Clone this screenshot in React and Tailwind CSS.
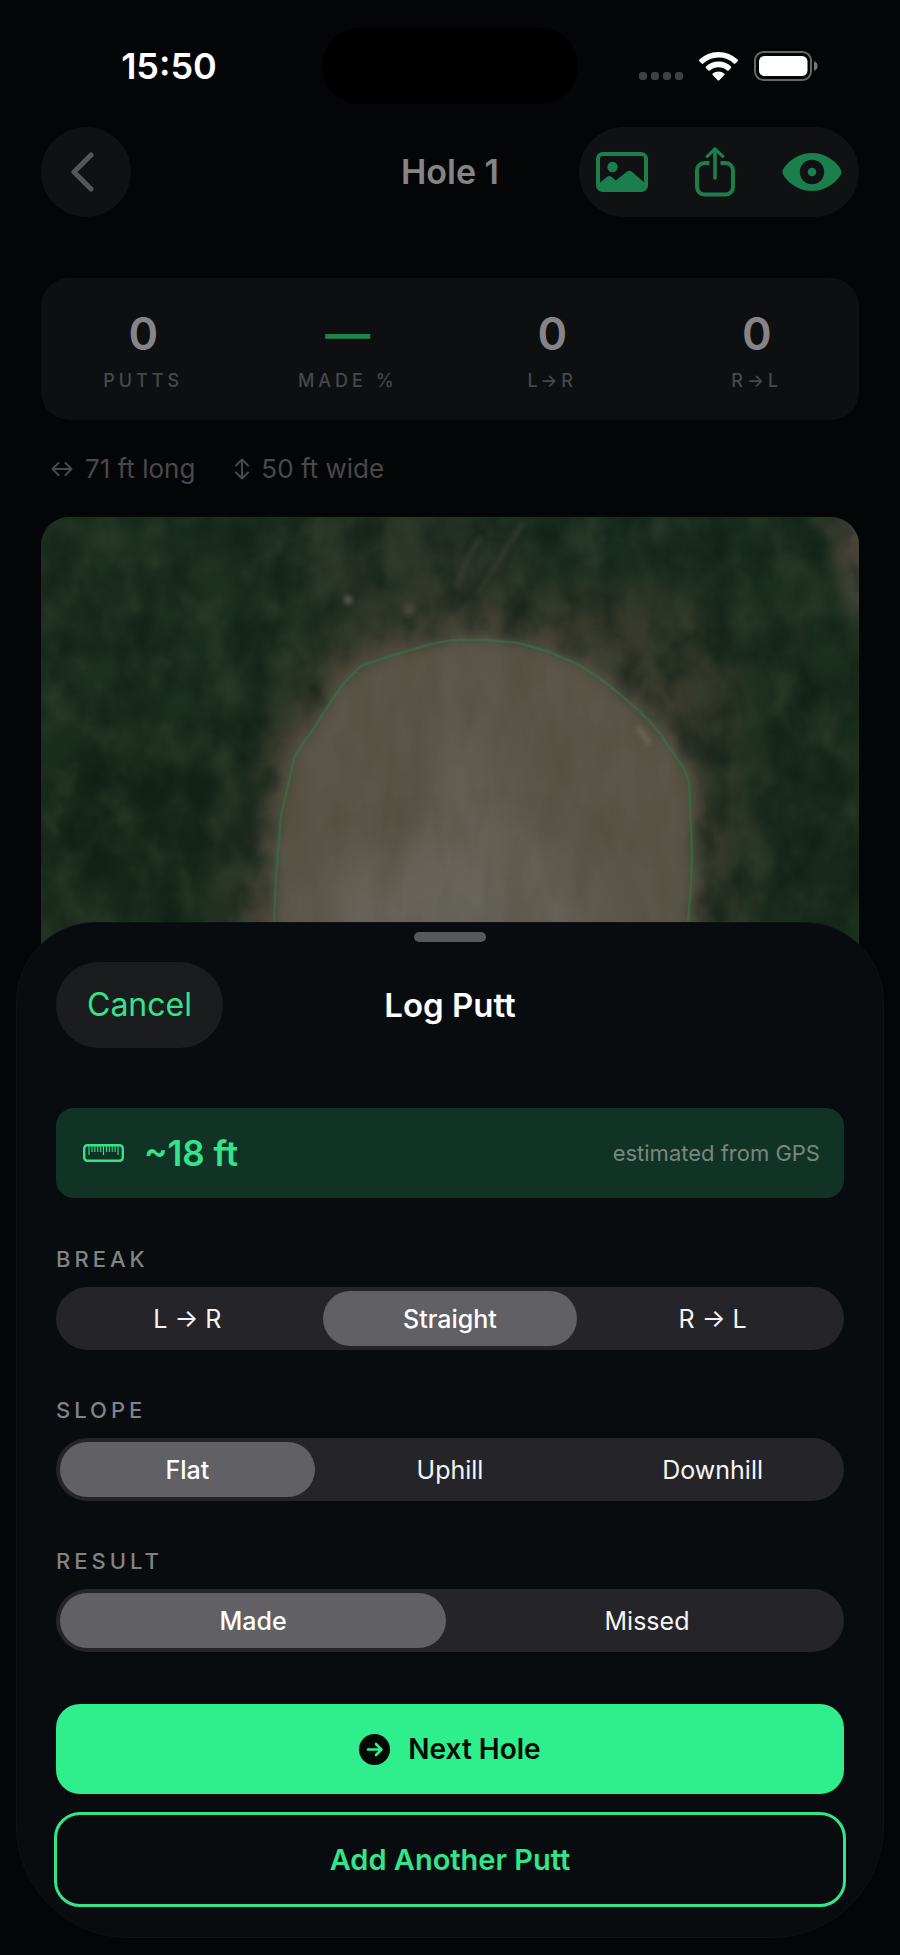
import { useState } from "react";

function WifiIcon() {
  return (
    <svg viewBox="0 0 39 29" className="h-[29px] w-[39px]" fill="#fff" aria-hidden="true">
      <path d="M19.500 0C27 0 33.800 2.900 38.600 7.600c.5.5.5 1.100 0 1.600l-2.300 2.300c-.5.5-1.100.5-1.600 0A21.800 21.800 0 0 0 19.500 5.600c-5.900 0-11.200 2.200-15.200 5.900-.5.500-1.100.5-1.600 0L.4 9.200c-.5-.5-.5-1.100 0-1.600A27.300 27.300 0 0 1 19.500 0Z" />
      <path d="M19.500 9.600c4.800 0 9.200 1.800 12.500 4.800.5.500.5 1.100 0 1.600l-2.400 2.400c-.5.500-1.100.5-1.600 0a12.800 12.800 0 0 0-17 0c-.5.500-1.100.5-1.600 0L7 16c-.5-.5-.5-1.100 0-1.600a18.600 18.600 0 0 1 12.500-4.800Z" />
      <path d="M19.500 19.500c2.200 0 4.200.8 5.700 2 .5.400.5 1.100.1 1.600l-5 5.100c-.5.500-1.100.5-1.600 0l-5-5.100c-.4-.5-.4-1.200.1-1.600 1.500-1.200 3.500-2 5.700-2Z" />
    </svg>
  );
}

function BatteryIcon() {
  return (
    <svg viewBox="0 0 64 30" className="h-[30px] w-16" aria-hidden="true">
      <rect x="1" y="1" width="56" height="28" rx="8.500" fill="none" stroke="#66676a" strokeWidth="2" />
      <rect x="5" y="5" width="48.500" height="20" rx="5.500" fill="#fff" />
      <path d="M60 10.200c2.300.7 3.600 2.600 3.600 4.800s-1.300 4.100-3.600 4.800Z" fill="#77787a" />
    </svg>
  );
}

function PhotoIcon() {
  return (
    <svg viewBox="0 0 52 40" className="h-10 w-[52px]" aria-hidden="true">
      <rect x="2" y="2" width="48" height="36" rx="4.500" fill="none" stroke="currentColor" strokeWidth="4" />
      <circle cx="16.500" cy="15" r="5.200" fill="currentColor" />
      <path d="M3 31.500 11.200 24.800c1.500-1.200 3-1.100 4.300 0l4.300 3.700L30.400 20c2-1.600 4-1.500 5.900.1L49 31.300V35a3.500 3.500 0 0 1-3.500 3.500h-39A3.500 3.500 0 0 1 3 35Z" fill="currentColor" />
    </svg>
  );
}

function ShareIcon() {
  return (
    <svg viewBox="0 0 40 50" className="h-[50px] w-10" fill="none" stroke="currentColor" strokeWidth="4" aria-hidden="true">
      <path d="M14.500 16H9.500A7.500 7.500 0 0 0 2 23.500V40a7.500 7.500 0 0 0 7.500 7.500h21A7.500 7.500 0 0 0 38 40V23.500A7.500 7.500 0 0 0 30.500 16h-5" />
      <path d="M20 31V3" strokeWidth="3.600" strokeLinecap="round" />
      <path d="m12.300 9.300 7.700-7.500 7.700 7.500" strokeWidth="3.200" strokeLinecap="round" strokeLinejoin="round" />
    </svg>
  );
}

function EyeIcon() {
  return (
    <svg viewBox="0 0 60 38" className="h-[38px] w-[60px]" fill="currentColor" aria-hidden="true">
      <path
        fillRule="evenodd"
        d="M30 0C47.500 0 59.500 14.300 59.500 19S47.500 38 30 38 .5 23.700.5 19 12.500 0 30 0Zm0 6.800a12.200 12.200 0 1 0 0 24.400 12.200 12.200 0 0 0 0-24.400Z"
      />
      <circle cx="30" cy="19" r="4.300" />
    </svg>
  );
}

function RulerIcon() {
  return (
    <svg viewBox="0 0 41 18" className="h-[18px] w-[41px]" fill="none" stroke="currentColor" aria-hidden="true">
      <rect x="1.200" y="1.200" width="38.600" height="15.600" rx="3.200" strokeWidth="2.400" />
      <path
        d="M6 2v9M9 2v6M11.900 2v6M14.800 2v6M17.700 2v6M20.500 2v9M23.400 2v6M26.300 2v6M29.200 2v6M32.100 2v6M35 2v9"
        strokeWidth="1.100"
      />
    </svg>
  );
}

function NextIcon() {
  return (
    <svg viewBox="0 0 31 31" className="h-[31px] w-[31px]" aria-hidden="true">
      <circle cx="15.500" cy="15.500" r="15.500" fill="#020a05" />
      <path d="M9 15.500h13M17 10l5.500 5.500L17 21" fill="none" stroke="#2fef8d" strokeWidth="2.600" strokeLinecap="round" strokeLinejoin="round" />
    </svg>
  );
}

const GREEN_EDGE =
  "233,440 233,405 235,360 240,300 249,260 253,241 262,226 272,213 289,186 303,166 320,149 343,141 367,134 390,127 412,123 445,123 478,126 508,135 536,147 557,160 576,175 594,190 610,206 620,218 632,236 643,252 648,264 649,290 651,333 650,366 647,405 646,440";

function GreenMap() {
  return (
    <svg viewBox="0 0 818 440" preserveAspectRatio="xMidYMin slice" className="block h-full w-full" role="img" aria-label="Aerial view of the green">
      <defs>
        <filter id="soft" x="-30%" y="-30%" width="160%" height="160%" colorInterpolationFilters="sRGB">
          <feGaussianBlur stdDeviation="8" />
        </filter>
        <filter id="haze" x="-60%" y="-60%" width="220%" height="220%" colorInterpolationFilters="sRGB">
          <feGaussianBlur stdDeviation="24" />
        </filter>
        <filter id="fine" x="-20%" y="-20%" width="140%" height="140%" colorInterpolationFilters="sRGB">
          <feGaussianBlur stdDeviation="2.500" />
        </filter>
        <filter id="light" x="0" y="0" width="100%" height="100%" colorInterpolationFilters="sRGB">
          <feTurbulence type="fractalNoise" baseFrequency="0.03 0.024" numOctaves="4" seed="7" />
          <feColorMatrix values="0 0 0 0 0.2  0 0 0 0 0.25  0 0 0 0 0.18  2.600 0 0 0 -1.100" />
          <feGaussianBlur stdDeviation="1.500" />
        </filter>
        <filter id="dark" x="0" y="0" width="100%" height="100%" colorInterpolationFilters="sRGB">
          <feTurbulence type="fractalNoise" baseFrequency="0.026 0.02" numOctaves="4" seed="23" />
          <feColorMatrix values="0 0 0 0 0.05  0 0 0 0 0.11  0 0 0 0 0.08  2.600 0 0 0 -1.050" />
          <feGaussianBlur stdDeviation="1.500" />
        </filter>
        <filter id="streak" x="0" y="0" width="100%" height="100%" colorInterpolationFilters="sRGB">
          <feTurbulence type="fractalNoise" baseFrequency="0.03 0.012" numOctaves="3" seed="4" />
          <feColorMatrix values="0 0 0 0 0.26  0 0 0 0 0.24  0 0 0 0 0.16  2 0 0 0 -0.800" />
        </filter>
        <clipPath id="greenClip">
          <polygon points={GREEN_EDGE} />
        </clipPath>
      </defs>

      <rect width="818" height="440" fill="#1c3020" />
      <ellipse cx="100" cy="310" rx="110" ry="90" fill="#152819" filter="url(#haze)" />
      <ellipse cx="770" cy="300" rx="50" ry="130" fill="#16291b" filter="url(#haze)" />
      <ellipse cx="600" cy="30" rx="120" ry="40" fill="#182c20" filter="url(#haze)" />
      <ellipse cx="370" cy="50" rx="110" ry="70" fill="#2e362a" filter="url(#haze)" />
      <ellipse cx="30" cy="420" rx="60" ry="30" fill="#25331f" filter="url(#haze)" />

      <path d="M175 440 200 300Q225 180 290 115Q370 70 470 78Q610 50 680 110Q700 200 702 300L700 440Z" fill="#393a2d" filter="url(#haze)" />
      <path d="M198 440 220 300Q240 195 295 138Q375 88 450 96Q565 110 628 190Q674 255 668 330L670 440Z" fill="#464336" filter="url(#soft)" />
      <path d="M776 0h60v140Q814 100 800 70Q794 30 776 0Z" fill="#49453a" filter="url(#soft)" />

      <rect width="818" height="440" filter="url(#light)" opacity="0.600" />
      <rect width="818" height="440" filter="url(#dark)" opacity="0.600" />

      <polygon points={GREEN_EDGE} fill="#5b5647" stroke="#5b5647" strokeWidth="6" filter="url(#soft)" />
      <g clipPath="url(#greenClip)">
        <path d="M430 160Q480 300 460 440H390Q380 330 410 160Z" fill="#68645a" opacity="0.800" filter="url(#haze)" />
        <path d="M290 370Q340 310 520 330L570 440H260Z" fill="#69655b" opacity="0.900" filter="url(#haze)" />
        <rect width="818" height="440" filter="url(#streak)" opacity="0.250" />
      </g>

      <g filter="url(#fine)" fill="none">
        <circle cx="307" cy="83" r="4" fill="#5a6058" />
        <circle cx="368" cy="92" r="6" fill="#48463c" />
        <path d="M482 6Q460 40 436 78" stroke="#3b3f34" strokeWidth="3" />
        <path d="M440 20Q424 42 416 70" stroke="#383c32" strokeWidth="4" />
        <path d="M596 210Q604 218 609 228" stroke="#6c6657" strokeWidth="5" />
      </g>

      <polyline points={GREEN_EDGE} fill="none" stroke="#2c7a4a" strokeOpacity="0.550" strokeWidth="2.500" strokeLinejoin="round" />
    </svg>
  );
}

function Stat({ value, label, accent }) {
  return (
    <div className="flex flex-col items-center">
      <dd className={`order-1 text-[45px] leading-11 font-semibold ${accent ? "text-[#1f8350]" : "text-[#858587]"}`}>{value}</dd>
      <dt className="order-2 mt-[13px] text-lg leading-6 font-medium tracking-[4px] text-[#47484a]">{label}</dt>
    </div>
  );
}

function Segmented({ name, label, options, initial }) {
  const [value, setValue] = useState(initial);
  return (
    <section className="flex flex-col gap-4">
      <h3 id={`${name}-label`} className="text-[22px] leading-6 font-medium tracking-[4px] text-[#828385]">
        {label}
      </h3>
      <div role="radiogroup" aria-labelledby={`${name}-label`} className="grid h-[63px] auto-cols-fr grid-flow-col gap-2 rounded-full bg-[#252529] p-1">
        {options.map((option) => (
          <label key={option} className="relative flex cursor-pointer">
            <input
              type="radio"
              name={name}
              value={option}
              checked={value === option}
              onChange={() => setValue(option)}
              className="peer sr-only"
            />
            <span className="flex flex-1 items-center justify-center rounded-full text-[25px] leading-8 text-[#f5f5f6] peer-checked:bg-[#606065] peer-checked:font-medium peer-checked:text-white">
              {option}
            </span>
          </label>
        ))}
      </div>
    </section>
  );
}

export default function App() {
  return (
    <div className="min-h-screen bg-[#040507] pb-4 font-['Inter',sans-serif] text-white">
      <div className="grid grid-cols-[1fr_auto_1fr] items-center pt-7">
        <div className="pl-4 text-center text-4xl leading-10 font-semibold">15:50</div>
        <div className="h-[76px] w-64 rounded-full bg-black" />
        <div className="flex items-center justify-center pr-[22px]">
          <div className="mr-4 flex gap-1 self-end pb-px">
            <span className="h-2 w-2 rounded-[3px] bg-[#3f4042]" />
            <span className="h-2 w-2 rounded-[3px] bg-[#3f4042]" />
            <span className="h-2 w-2 rounded-[3px] bg-[#3f4042]" />
            <span className="h-2 w-2 rounded-[3px] bg-[#3f4042]" />
          </div>
          <div className="mr-4">
            <WifiIcon />
          </div>
          <BatteryIcon />
        </div>
      </div>

      <header className="mt-[23px] grid grid-cols-[1fr_auto_1fr] items-center px-[41px]">
        <button type="button" aria-label="Back" className="flex h-[90px] w-[90px] items-center justify-center rounded-full bg-[#101113] text-[#565658]">
          <svg viewBox="0 0 24 40" className="mr-2 h-10 w-6" fill="none" stroke="currentColor" strokeWidth="5" strokeLinecap="round" strokeLinejoin="round" aria-hidden="true">
            <path d="M21 3 4 20l17 17" />
          </svg>
        </button>
        <h1 className="text-[34px] leading-10 font-semibold text-[#858587]">Hole 1</h1>
        <div className="flex h-[90px] w-[280px] items-center justify-between justify-self-end rounded-full bg-[#101113] px-[17px] text-[#1a7f4c]">
          <button type="button" aria-label="Photo">
            <PhotoIcon />
          </button>
          <button type="button" aria-label="Share">
            <ShareIcon />
          </button>
          <button type="button" aria-label="Show">
            <EyeIcon />
          </button>
        </div>
      </header>

      <main className="px-[41px]">
        <dl className="mt-[61px] grid grid-cols-4 rounded-[28px] bg-[#0e0f11] pt-[34px] pb-[27px]">
          <Stat value="0" label="PUTTS" />
          <Stat value="—" label="MADE %" accent />
          <Stat value="0" label="L→R" />
          <Stat value="0" label="R→L" />
        </dl>

        <div className="mt-[33px] flex gap-10 pl-2.5 text-[26px] leading-8 text-[#49494b]">
          <p className="flex items-center gap-3">
            <svg viewBox="0 0 22 14" className="h-3.5 w-[22px]" fill="none" stroke="currentColor" strokeWidth="2" strokeLinecap="round" strokeLinejoin="round" aria-hidden="true">
              <path d="M1.500 7h19M7.500 1 1.500 7l6 6M14.500 1l6 6-6 6" />
            </svg>
            71 ft long
          </p>
          <p className="flex items-center gap-3">
            <svg viewBox="0 0 14 22" className="h-[22px] w-3.5" fill="none" stroke="currentColor" strokeWidth="2" strokeLinecap="round" strokeLinejoin="round" aria-hidden="true">
              <path d="M7 1.500v19M1 7.500l6-6 6 6M1 14.500l6 6 6-6" />
            </svg>
            50 ft wide
          </p>
        </div>

        <div className="mt-8 h-[440px] overflow-hidden rounded-t-[28px]">
          <GreenMap />
        </div>
      </main>

      <div role="dialog" aria-labelledby="sheet-title" className="relative mx-4 -mt-[35px] flex flex-col rounded-t-[80px] rounded-b-[112px] border border-[#0e1215] bg-[#080c0f] px-[39px] pt-[9px] pb-8">
        <div className="h-2.5 w-[72px] self-center rounded-full bg-[#57585c]" />

        <div className="mt-5 grid grid-cols-[1fr_auto_1fr] items-center">
          <button type="button" className="h-[86px] justify-self-start rounded-full bg-[#1b1c1e] px-[31px] text-[32px] leading-10 text-[#32e58b]">
            Cancel
          </button>
          <h2 id="sheet-title" className="text-[33px] leading-10 font-semibold">
            Log Putt
          </h2>
        </div>

        <div className="mt-[60px] flex h-[90px] items-center rounded-[18px] bg-[#113326] pr-6 pl-[27px] text-[#32e58b]">
          <RulerIcon />
          <span className="ml-5 text-[35px] leading-10 font-semibold">~18 ft</span>
          <span className="ml-auto text-[22px] leading-7 text-[#76897f]">estimated from GPS</span>
        </div>

        <div className="mt-[49px] flex flex-col gap-12">
          <Segmented name="break" label="BREAK" options={["L → R", "Straight", "R → L"]} initial="Straight" />
          <Segmented name="slope" label="SLOPE" options={["Flat", "Uphill", "Downhill"]} initial="Flat" />
          <Segmented name="result" label="RESULT" options={["Made", "Missed"]} initial="Made" />
        </div>

        <button type="button" className="mt-[52px] flex h-[90px] items-center justify-center gap-[18px] rounded-3xl bg-[#2fef8d] text-[28px] leading-8 font-semibold text-[#020a05]">
          <NextIcon />
          Next Hole
        </button>
        <button type="button" className="mt-5 h-[91px] rounded-3xl text-[29px] leading-8 font-semibold text-[#32e58b] outline-3 -outline-offset-1 outline-[#32e58b]">
          Add Another Putt
        </button>
      </div>
    </div>
  );
}
